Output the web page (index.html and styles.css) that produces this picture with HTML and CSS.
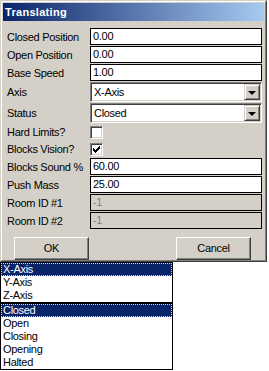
FILE: index.html
```html
<!DOCTYPE html>
<html lang="en">
    <head>
        <meta charset="UTF-8">
        <title>Translating</title>
        <link rel="stylesheet" href="styles.css">
    </head>
    <body>
        <div class="window">
            <div class="frame">
                <div class="titlebar">Translating</div>

                <div class="form">
                    <div class="lbl">Closed Position</div>
                    <div class="field">0.00</div>

                    <div class="lbl">Open Position</div>
                    <div class="field">0.00</div>

                    <div class="lbl">Base Speed</div>
                    <div class="field">1.00</div>

                    <div class="lbl">Axis</div>
                    <div class="combo">
                        <span class="combo-text">X-Axis</span>
                        <span class="drop"><span class="arrow"></span></span>
                    </div>

                    <div class="lbl">Status</div>
                    <div class="combo">
                        <span class="combo-text">Closed</span>
                        <span class="drop"><span class="arrow"></span></span>
                    </div>

                    <div class="lbl">Hard Limits?</div>
                    <div class="check-cell"><div class="check"></div></div>

                    <div class="lbl">Blocks Vision?</div>
                    <div class="check-cell">
                        <div class="check">
                            <svg width="11" height="11" viewBox="1 1 11 11" shape-rendering="crispEdges">
                                <path d="M3 5h1v3h-1z M4 6h1v3h-1z M5 7h1v3h-1z M6 6h1v3h-1z M7 5h1v3h-1z M8 4h1v3h-1z M9 3h1v3h-1z" fill="#000"/>
                            </svg>
                        </div>
                    </div>

                    <div class="lbl">Blocks Sound %</div>
                    <div class="field">60.00</div>

                    <div class="lbl">Push Mass</div>
                    <div class="field">25.00</div>

                    <div class="lbl">Room ID #1</div>
                    <div class="field disabled">-1</div>

                    <div class="lbl">Room ID #2</div>
                    <div class="field disabled">-1</div>
                </div>

                <div class="buttons">
                    <div class="btn">OK</div>
                    <div class="btn">Cancel</div>
                </div>
            </div>
        </div>

        <div class="list">
            <div class="item selected">X-Axis</div>
            <div class="item">Y-Axis</div>
            <div class="item">Z-Axis</div>
        </div>
        <div class="list">
            <div class="item selected">Closed</div>
            <div class="item">Open</div>
            <div class="item">Closing</div>
            <div class="item">Opening</div>
            <div class="item">Halted</div>
        </div>
    </body>
</html>
```
FILE: styles.css
```css
/* win2k classic look */

body{
    margin: 0;
    background-color: #fff;
    font-family: "Liberation Sans", Arial, sans-serif;
    font-size: 11px;
    letter-spacing: -0.3px;
    color: #000;
}

.window{
    width: 267px;
    height: 262px;
    box-sizing: border-box;
    background-color: #d4d0c8;
    border: 1px solid;
    border-color: #d4d0c8 #404040 #404040 #d4d0c8;
}

.frame{
    height: 100%;
    box-sizing: border-box;
    border: 1px solid;
    border-color: #fff #808080 #808080 #fff;
    padding: 1px;
}

.titlebar{
    height: 18px;
    line-height: 18px;
    padding-left: 2px;
    background: linear-gradient(to right, #0a246a, #a6caf0);
    color: #fff;
    font-weight: bold;
    letter-spacing: 0.3px;
}

.form{
    display: grid;
    grid-template-columns: 83px 172px;
    grid-template-rows: 17px 17px 17px 20px 20px 16px 16px 17px 17px 17px 17px;
    row-gap: 1px;
    margin-top: 7px;
    padding-left: 4px;
}

.lbl{
    align-self: center;
    white-space: nowrap;
}

.field{
    box-sizing: border-box;
    border: 1px solid #000;
    background-color: #fff;
    padding-left: 2px;
    line-height: 15px;
}

.field.disabled{
    background-color: #d4d0c8;
    color: #808080;
}

.combo{
    display: flex;
    box-sizing: border-box;
    background-color: #fff;
    border: 1px solid;
    border-color: #808080 #fff #fff #808080;
    box-shadow: inset 1px 1px #404040, inset -1px -1px #d4d0c8;
    padding: 1px;
}

.combo-text{
    flex: 1;
    padding-left: 2px;
    line-height: 16px;
}

.drop{
    width: 16px;
    height: 16px;
    box-sizing: border-box;
    background-color: #d4d0c8;
    border: 1px solid;
    border-color: #d4d0c8 #404040 #404040 #d4d0c8;
    box-shadow: inset 1px 1px #fff, inset -1px -1px #808080;
    display: flex;
    align-items: center;
    justify-content: center;
}

.arrow{
    width: 0;
    height: 0;
    border-left: 4px solid transparent;
    border-right: 4px solid transparent;
    border-top: 4px solid #000;
    margin-top: 1px;
}

.check-cell{
    padding-top: 2px;
}

.check{
    width: 13px;
    height: 13px;
    box-sizing: border-box;
    background-color: #fff;
    border: 1px solid;
    border-color: #808080 #fff #fff #808080;
    box-shadow: inset 1px 1px #404040, inset -1px -1px #d4d0c8;
}

.check svg{
    display: block;
}

.buttons{
    display: flex;
    gap: 87px;
    margin-top: 8px;
    padding-left: 11px;
}

.btn{
    width: 75px;
    height: 23px;
    box-sizing: border-box;
    border: 1px solid;
    border-color: #fff #404040 #404040 #fff;
    box-shadow: inset -1px -1px #808080;
    text-align: center;
    line-height: 21px;
}

.list{
    width: 173px;
    box-sizing: border-box;
    border: 1px solid #000;
    background-color: #fff;
}

.item{
    height: 13px;
    line-height: 13px;
    padding-left: 2px;
    box-sizing: border-box;
}

.item.selected{
    background-color: #0a246a;
    color: #fff;
    border: 1px dotted #f0dc8c;
    padding-left: 1px;
    line-height: 11px;
}
```
